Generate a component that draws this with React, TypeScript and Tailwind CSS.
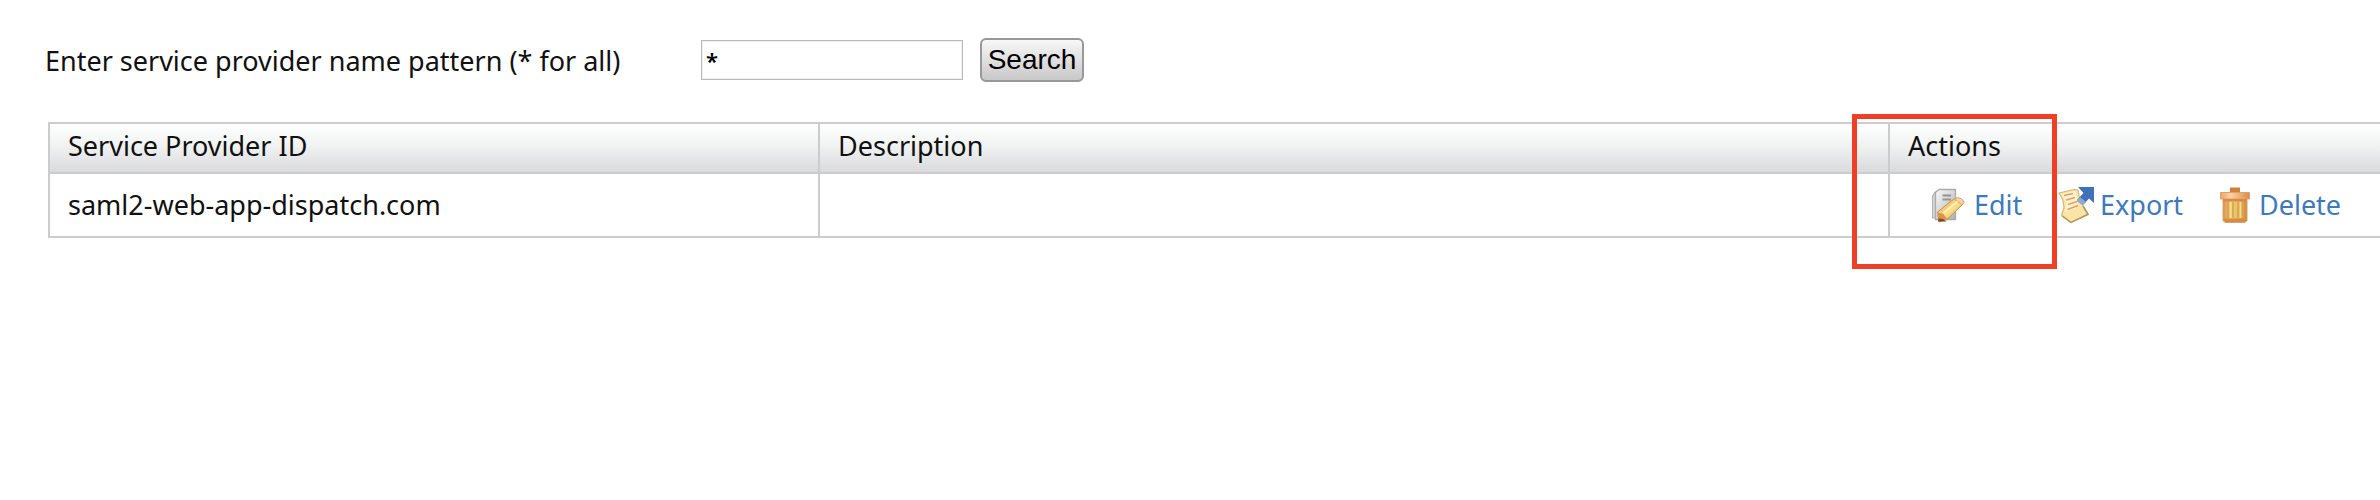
import type { ReactNode } from "react";

function EditIcon() {
  return (
    <svg className="h-9 w-9 shrink-0" viewBox="0 0 36 36" aria-hidden="true">
      <defs>
        <linearGradient id="page" x1="0" y1="0" x2="1" y2="1">
          <stop offset="0" stopColor="#fafafa" />
          <stop offset="1" stopColor="#b0b0b0" />
        </linearGradient>
        <linearGradient id="pencil" x1="0" y1="0" x2="1" y2="1">
          <stop offset="0" stopColor="#d9a552" />
          <stop offset="0.5" stopColor="#fbe08a" />
          <stop offset="1" stopColor="#d0953f" />
        </linearGradient>
      </defs>
      <path d="M2.500 9 5 5H22V31H2.500z" fill="#d6d6d6" stroke="#b5b5b5" strokeWidth="1.200" />
      <path d="M5.500 5.500 9 2.500H25.500V32.500H5.500z" fill="url(#page)" stroke="#aaaaaa" strokeWidth="1.300" />
      <path d="M12.500 8.500H21M12.500 12.500H21" stroke="#949494" strokeWidth="1.800" />
      <path d="M7.500 25 24.500 11.500 33.500 16.500 17 32.500 9 35z" fill="url(#pencil)" stroke="#c9924a" strokeWidth="1" strokeLinejoin="round" />
      <path d="M24.500 12 28 10.500Q32 11 34.500 15L32 18z" fill="#f7d3a4" stroke="#d19a5c" strokeWidth="0.800" />
      <path d="M7.500 25.500 13.500 27 17 32 9.500 34.500z" fill="#dc9250" />
      <path d="M8.500 31.500 13 32 16.500 34.500H8z" fill="#7d4b2b" />
      <path d="M13.500 26 27.500 14.500" stroke="#fff0bc" strokeWidth="1.800" />
    </svg>
  );
}

function ExportIcon() {
  return (
    <svg className="h-[38px] w-9 shrink-0" viewBox="0 0 36 38" aria-hidden="true">
      <path d="M1 7 16 3.500 20 4 22 15 30 28 13 36.500 3.500 29 6 22 5 14z" fill="#f9e6a6" stroke="#d8b677" strokeWidth="1.200" strokeLinejoin="round" />
      <path d="M3 8 17 5 20 15 18 22 7 26 8 17z" fill="#fff3cd" />
      <path d="M4 30 13 36.500 30 28.500 25 20" fill="none" stroke="#ad9a5f" strokeWidth="1.500" />
      <path d="M6 9.500 15 7.500M8 14 17 11.500M10 18.500 19 15.500M9.500 23.500 20 19.500" stroke="#dfa069" strokeWidth="1.500" />
      <path d="M20 1H36V17L31 12.500 25 19 19 14 25.500 7z" fill="#3f72b9" />
      <path d="M24.500 19 18.500 15 22 11 28 16z" fill="#8fa9cf" />
    </svg>
  );
}

function TrashIcon() {
  return (
    <svg className="h-9 w-8 shrink-0" viewBox="0 0 32 36" aria-hidden="true">
      <defs>
        <linearGradient id="lid" x1="0" y1="0" x2="1" y2="0">
          <stop offset="0" stopColor="#e8a56b" />
          <stop offset="0.35" stopColor="#fbd3a2" />
          <stop offset="1" stopColor="#dc8d49" />
        </linearGradient>
        <linearGradient id="can" x1="0" y1="0" x2="1" y2="0">
          <stop offset="0" stopColor="#dd9350" />
          <stop offset="0.350" stopColor="#f0cc7a" />
          <stop offset="0.700" stopColor="#e5bb60" />
          <stop offset="1" stopColor="#d28441" />
        </linearGradient>
      </defs>
      <path d="M11 0.500H21V6H11z" fill="#d5803a" />
      <path d="M1.500 5.500H30.500V12H1.500z" fill="url(#lid)" stroke="#e0a06a" strokeWidth="1" />
      <path d="M4 12.500H28V33.500L26 35.500H6L4 33.500z" fill="url(#can)" stroke="#dba067" strokeWidth="1" />
      <path d="M4 12H28V14.500H4z" fill="#d98a48" />
      <path d="M9 15V31M14 15V31M19 15V31M24 15V31" stroke="#d6a348" strokeWidth="1.500" />
      <path d="M11.500 15V31M21.500 15V31" stroke="#f6dd90" strokeWidth="1.500" />
      <path d="M5 31.500H27V34L25.500 35H6.500L5 34z" fill="#d98b46" />
    </svg>
  );
}

function Action({ icon, label, className }: { icon: ReactNode; label: string; className: string }) {
  return (
    <a href="#" className={`flex items-center text-[#4079b8] ${className}`}>
      {icon}
      {label}
    </a>
  );
}

export default function App() {
  return (
    <main className="min-h-screen overflow-x-hidden bg-white pt-[38px] font-['Noto_Sans',sans-serif] text-[27px] leading-8 text-[#111]">
      <form className="flex items-center pl-[45px]" onSubmit={(e) => e.preventDefault()}>
        <label htmlFor="pattern" className="w-[656px] pt-0.5">
          Enter service provider name pattern (* for all)
        </label>
        <input
          id="pattern"
          type="text"
          defaultValue="*"
          className="h-10 w-[262px] border border-[#bbb] bg-white px-1 text-[22px] leading-8 font-semibold text-black shadow-[inset_0_0_0_1px_#eee] outline-none"
        />
        <button
          type="submit"
          className="ml-[17px] h-11 w-[104px] rounded-md border-2 border-[#999] bg-linear-to-b from-[#f8f8f8] to-[#c8c8c8] font-['Liberation_Sans',sans-serif] text-[28px] leading-10 text-black"
        >
          Search
        </button>
      </form>

      <div className="relative mt-10 ml-12">
        <table className="w-full table-fixed border-separate border-spacing-0 border-t-2 border-l-2 border-[#ccc] text-left">
          <colgroup>
            <col className="w-[33.050%]" />
            <col className="w-[45.920%]" />
            <col />
          </colgroup>
          <thead>
            <tr className="h-[50px] bg-linear-to-b from-white via-[#f0f2f2] via-45% to-[#d8d8da]">
              <th className="border-r-2 border-b-2 border-[#ccc] px-[18px] pb-1 font-normal">Service Provider ID</th>
              <th className="border-r-2 border-b-2 border-[#ccc] px-[18px] pb-1 font-normal">Description</th>
              <th className="border-b-2 border-[#ccc] px-[18px] pb-1 font-normal">Actions</th>
            </tr>
          </thead>
          <tbody>
            <tr className="h-16">
              <td className="border-r-2 border-b-2 border-[#ccc] px-[18px]">saml2-web-app-dispatch.com</td>
              <td className="border-r-2 border-b-2 border-[#ccc]" />
              <td className="border-b-2 border-[#ccc] pl-10">
                <div className="flex items-center">
                  <Action icon={<EditIcon />} label="Edit" className="w-32 gap-2" />
                  <Action icon={<ExportIcon />} label="Export" className="w-[161px] gap-1.5" />
                  <Action icon={<TrashIcon />} label="Delete" className="gap-2" />
                </div>
              </td>
            </tr>
          </tbody>
        </table>
        <div className="pointer-events-none absolute -top-2 left-[77.360%] h-[155px] w-[205px] border-5 border-[#ee4027]" />
      </div>
    </main>
  );
}
